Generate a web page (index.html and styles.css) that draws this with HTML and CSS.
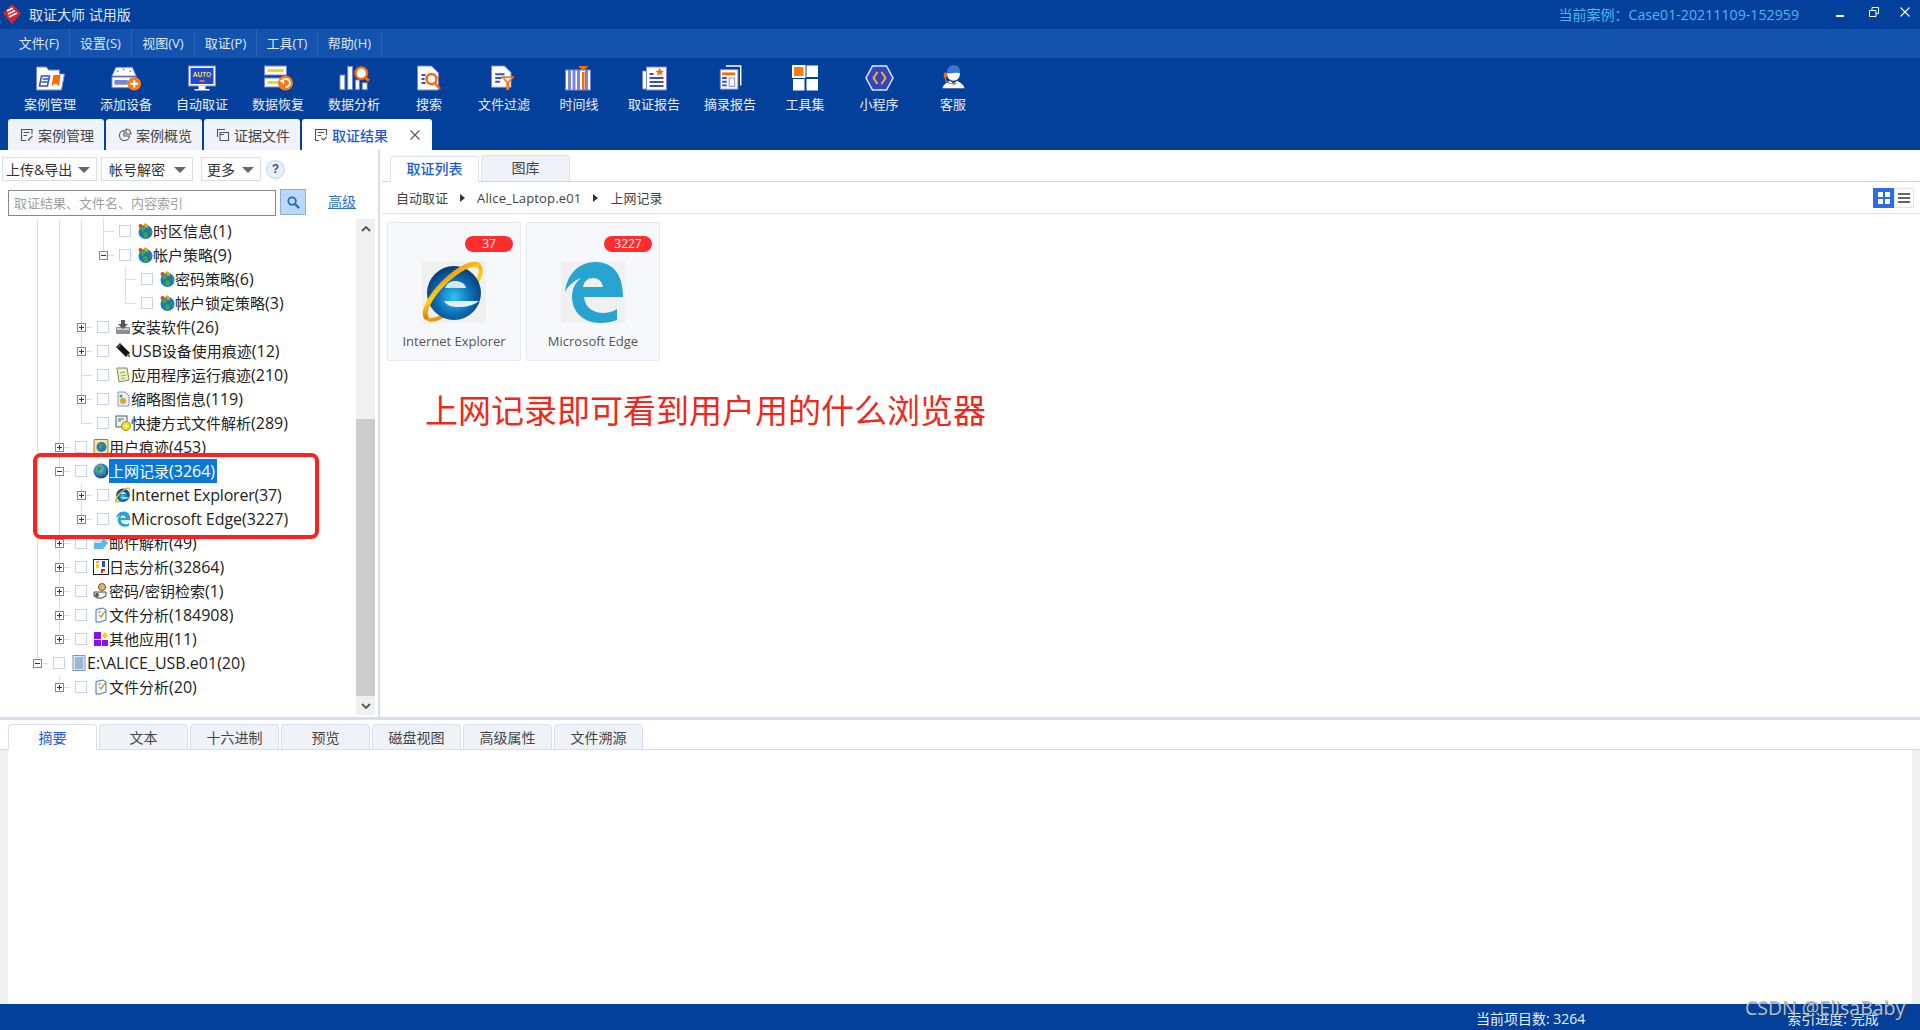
FILE: index.html
```html
<!DOCTYPE html>
<html lang="zh-CN">
<head>
<meta charset="utf-8">
<title>取证大师 试用版</title>
<link rel="stylesheet" href="styles.css">
</head>
<body>
<svg class="sprite" aria-hidden="true">
  <defs>
    <radialGradient id="gSphere" cx="50%" cy="58%" r="58%"><stop offset="0" stop-color="#35c4f4"/><stop offset=".5" stop-color="#0e74ba"/><stop offset="1" stop-color="#063a74"/></radialGradient>
    <linearGradient id="gRing" x1="0" y1="1" x2="1" y2="0"><stop offset="0" stop-color="#e07c08"/><stop offset=".5" stop-color="#ffcf14"/><stop offset="1" stop-color="#ee9410"/></linearGradient>
    <radialGradient id="gGlobe" cx="40%" cy="35%" r="70%"><stop offset="0" stop-color="#8fd0ee"/><stop offset=".6" stop-color="#2a78b8"/><stop offset="1" stop-color="#0f3f80"/></radialGradient>
  </defs>
  <symbol id="i-ie" viewBox="0 0 64 62">
    <g transform="rotate(-45 31 31)"><ellipse cx="31" cy="31" rx="37" ry="13" fill="none" stroke="url(#gRing)" stroke-width="4"/></g>
    <circle cx="32" cy="32" r="27" fill="url(#gSphere)"/>
    <path d="M23 27C25 22 29 20 33 20C38 20 43 22 44 27Z" fill="#d6e8f2"/>
    <path d="M22 40C25 45 30 46 37 46C45 46 52 44 57 40Z" fill="#e2eef4"/>
    <g transform="rotate(-45 31 31)"><path d="M-6 31A37 13 0 0 1 68 31" fill="none" stroke="url(#gRing)" stroke-width="5"/></g>
  </symbol>
  <symbol id="i-edge" viewBox="0 0 64 62">
    <path fill="#28a4d0" fill-rule="evenodd" d="M4 31C6 12 19 1 34 1C52 1 62 13 62 36H23C24 47 33 52 42 52C47 52 52 50.500 56 48V59C51 61 45 62 39 62C22 62 11 50 11 36C11 28 14 22 20 17C12 20 7 25 4 31ZM22 26H42C41 20 37 17 32 17C27 17 23 20 22 26Z"/>
  </symbol>
  <symbol id="i-net" viewBox="0 0 16 16">
    <circle cx="8.500" cy="9" r="7" fill="#1c78b4"/>
    <path d="M2 6L7 2L9 5L6 9Z" fill="#3da850"/><path d="M7 2L10 1L11 5L9 5Z" fill="#e8a020"/>
    <path d="M6 10L10 9L11 14L7 15Z" fill="#3fa84a"/><path d="M11 7L15.500 8L14 12Z" fill="#2f9a50"/>
    <circle cx="3.500" cy="3" r="2" fill="#d8452a"/><circle cx="8" cy="1.800" r="1.500" fill="#e8a020"/>
  </symbol>
  <symbol id="i-install" viewBox="0 0 16 16">
    <rect x="1" y="8" width="14" height="7" rx="1" fill="#8a8f96"/><rect x="2" y="9" width="12" height="2" fill="#c8ccd2"/>
    <path d="M6 1H10V5H13L8 10L3 5H6Z" fill="#55595f"/>
  </symbol>
  <symbol id="i-usb" viewBox="0 0 16 16">
    <path d="M1 4L5 0L15 10L11 14Z" fill="#111"/><path d="M11.500 12L13 10.500L15.500 13L14 14.500Z" fill="#777"/><path d="M2 4L5 1L6 2L3 5Z" fill="#666"/>
  </symbol>
  <symbol id="i-app" viewBox="0 0 16 16">
    <path d="M2 1H12L14 13L4 15Z" fill="#eef0c8" stroke="#7f8a60"/>
    <path d="M5 6L10 5M6 9L11 8M6 12L10 11" stroke="#8cb050"/>
  </symbol>
  <symbol id="i-thumb" viewBox="0 0 16 16">
    <path d="M3 1H10L14 5V15H3Z" fill="#e6eefa" stroke="#7f9cc8"/>
    <circle cx="8" cy="10" r="3" fill="#e8a020"/><circle cx="6" cy="5" r="1.500" fill="#4aa84a"/>
  </symbol>
  <symbol id="i-short" viewBox="0 0 16 16">
    <rect x="1" y="1" width="11" height="11" fill="#eef2f8" stroke="#505a6a"/><path d="M3 4H9M3 6H6" stroke="#2a7a50"/>
    <circle cx="11" cy="11" r="4.500" fill="#f5e020" stroke="#a09000"/><circle cx="11" cy="11" r="1.500" fill="#fff"/>
  </symbol>
  <symbol id="i-user" viewBox="0 0 16 16">
    <rect x="1" y="0.500" width="14" height="15" rx="1" fill="#f4e2a8" stroke="#a8781c"/>
    <circle cx="8.500" cy="8" r="5" fill="#2a78b8"/><path d="M6 5L10 5L9 9L6 10Z" fill="#3fa84a"/>
  </symbol>
  <symbol id="i-globe" viewBox="0 0 16 16">
    <circle cx="8" cy="8" r="7.500" fill="url(#gGlobe)"/>
    <path d="M4 4C6 3 9 3 9 5C9 7 6 7 6 10C5 10 3 8 4 4Z" fill="#3f9a50"/><path d="M10 9L13 9L11 13Z" fill="#3f9a50"/>
  </symbol>
  <symbol id="i-mail" viewBox="0 0 16 16">
    <path d="M1 2H10L15 8L10 14H1Z" fill="#5fb8e8"/><path d="M1 2H10L8 8L1 8Z" fill="#c8e8f8"/>
  </symbol>
  <symbol id="i-log" viewBox="0 0 16 16">
    <rect x="0.500" y="0.500" width="15" height="15" fill="#fff" stroke="#222"/>
    <rect x="3" y="5" width="3" height="4" fill="#f0d020"/><rect x="9" y="2" width="3" height="6" fill="#2a50c0"/>
    <path d="M8 10H12V12H10V14H8Z" fill="#c83020"/><rect x="3" y="2" width="3" height="2" fill="#e0a0a0"/>
  </symbol>
  <symbol id="i-key" viewBox="0 0 16 16">
    <circle cx="9" cy="4" r="3.500" fill="#e8b070" stroke="#705030"/><path d="M1 9H13V13L9 15H4L1 13Z" fill="#f4f4f4" stroke="#444"/><circle cx="4" cy="12" r="2" fill="#555"/>
  </symbol>
  <symbol id="i-file" viewBox="0 0 16 16">
    <path d="M3 2.500L10 1V1L13 3V13L7 15L3 15Z" fill="#f6fafe" stroke="#3a78b8"/>
    <path d="M6 8L8 10L13 3" fill="none" stroke="#c8a020" stroke-width="1.300"/>
    <path d="M5 5H8" stroke="#e06050"/>
  </symbol>
  <symbol id="i-other" viewBox="0 0 16 16">
    <rect x="1" y="1" width="7" height="7" fill="#8a10f0"/><rect x="1" y="9" width="7" height="6" fill="#8a10f0"/><rect x="9" y="9" width="6" height="6" fill="#8a10f0"/>
    <path d="M12 1L15.500 4.500L12 8L8.500 4.500Z" fill="#f5d018"/>
  </symbol>
  <symbol id="i-ev" viewBox="0 0 16 16">
    <rect x="2" y="0.500" width="12" height="15" fill="#dbe8f4" stroke="#7a9ab8"/>
    <path d="M4 3H12M4 5H12M4 7H12M4 9H12M4 11H12M4 13H12" stroke="#5a8ab0"/>
  </symbol>
</svg>

<div class="app">
  <header class="titlebar">
    <svg class="logo" viewBox="0 0 18 20"><path d="M9 0L18 9L9 20L0 9Z" fill="#d8252c"/><path d="M4 7L10 4M5 10L12 6.500M6 13L14 9" stroke="#fff" stroke-width="1.600"/></svg>
    <span class="app-name">取证大师 试用版</span>
    <span class="case-name">当前案例：<span class="case-id">Case01-20211109-152959</span></span>
    <div class="winctl">
      <svg class="win win-min" viewBox="0 0 8 2"><rect width="8" height="2" fill="#fff"/></svg>
      <svg class="win win-res" viewBox="0 0 10 10"><path d="M3 3V.5H9.500V6.500H7M.5 3.500H7V9.500H.5Z" fill="none" stroke="#fff"/></svg>
      <svg class="win win-close" viewBox="0 0 10 10"><path d="M.5 .5L9.500 9.500M9.500 .5L.5 9.500" stroke="#fff" stroke-width="1.100"/></svg>
    </div>
  </header>
  <nav class="menubar">
    <span class="menu m1">文件(F)</span><span class="menu m2">设置(S)</span><span class="menu m3">视图(V)</span><span class="menu m4">取证(P)</span><span class="menu m5">工具(T)</span><span class="menu m6">帮助(H)</span>
  </nav>
  <section class="ribbon">
    <div class="tools">
      <div class="tool"><svg class="tool-ico" viewBox="0 0 30 26"><path d="M1 2H11L13 5H24V9H29L26 25H1Z" fill="#fff" stroke="#7b85d6"/><path d="M6 11H14L12 21H4ZM7 14H13M6 17H12" fill="#fff" stroke="#3b4cd0" stroke-width="1.500"/><path d="M18 10H25L23.500 21L20 18.500L16 21Z" fill="#ff6a00"/></svg><span class="tool-label">案例管理</span></div>
      <div class="tool"><svg class="tool-ico" viewBox="0 0 32 26"><path d="M5 2H22L26 11H1Z" fill="#fff" stroke="#7b85d6"/><circle cx="7" cy="6" r="1" fill="#7b85d6"/><circle cx="20" cy="6" r="1" fill="#7b85d6"/><circle cx="13" cy="4" r="1" fill="#7b85d6"/><rect x="1" y="12" width="25" height="11" fill="#fff" stroke="#7b85d6"/><rect x="3.500" y="15" width="14" height="5" rx="1" fill="#7b85d6"/><circle cx="24" cy="19" r="7" fill="#ff7a10"/><path d="M24 15V23M20 19H28" stroke="#fff" stroke-width="2"/></svg><span class="tool-label">添加设备</span></div>
      <div class="tool"><svg class="tool-ico" viewBox="0 0 30 26"><rect x="1" y="1" width="27" height="20" fill="#fff" stroke="#7b85d6"/><rect x="3" y="3" width="23" height="16" fill="#1b48d8"/><text class="auto-txt" x="14.500" y="12">AUTO</text><rect x="12" y="15" width="5" height="2" fill="#ff6a00"/><path d="M11 21H18V24H22V25.500H7V24H11Z" fill="#fff"/></svg><span class="tool-label">自动取证</span></div>
      <div class="tool"><svg class="tool-ico" viewBox="0 0 30 26"><rect x="1" y="1" width="22" height="9" fill="#fff" stroke="#7b85d6"/><rect x="4" y="4" width="16" height="3" fill="#f0d818"/><rect x="1" y="13" width="22" height="9" fill="#fff" stroke="#7b85d6"/><rect x="4" y="16" width="11" height="3" fill="#f0d818"/><circle cx="22" cy="18" r="7.500" fill="#ff7a10"/><path d="M18.500 17A4 4 0 1 1 22 22" fill="none" stroke="#fff" stroke-width="2"/><path d="M16 15H20.500V19.500Z" fill="#fff"/></svg><span class="tool-label">数据恢复</span></div>
      <div class="tool"><svg class="tool-ico" viewBox="0 0 32 26"><rect x="1" y="10" width="5" height="15" fill="#fff" stroke="#7b85d6"/><rect x="9" y="1" width="5" height="24" fill="#fff" stroke="#7b85d6"/><rect x="17" y="15" width="4" height="10" fill="#fff" stroke="#7b85d6"/><rect x="24" y="18" width="5" height="7" fill="#fff" stroke="#7b85d6"/><circle cx="23" cy="8" r="6" fill="#fff" stroke="#ff6a00" stroke-width="2.500"/><path d="M27 12.500L31 16" stroke="#ff6a00" stroke-width="3"/></svg><span class="tool-label">数据分析</span></div>
      <div class="tool"><svg class="tool-ico" viewBox="0 0 30 26"><path d="M3 1H17L24 8V25H3Z" fill="#fff" stroke="#7b85d6"/><path d="M7 10H11M7 14H10M7 18H11" stroke="#3b4cd0" stroke-width="2"/><circle cx="17" cy="14" r="5" fill="#fff" stroke="#ff6a00" stroke-width="2.500"/><path d="M20.500 18L25.500 24" stroke="#ff6a00" stroke-width="2.500"/></svg><span class="tool-label">搜索</span></div>
      <div class="tool"><svg class="tool-ico" viewBox="0 0 30 28"><path d="M1 1H15L22 8V24H1Z" fill="#fff" stroke="#7b85d6"/><path d="M5 10H15M5 14H12M5 18H10" stroke="#3b4cd0" stroke-width="2"/><path d="M11 12H26L20 19V27H17V19Z" fill="#ff7a10"/><path d="M15 14H22L18.500 18Z" fill="#fff"/></svg><span class="tool-label">文件过滤</span></div>
      <div class="tool"><svg class="tool-ico" viewBox="0 0 30 26"><rect x="1" y="5" width="25" height="20" fill="#fff" stroke="#7b85d6"/><path d="M5 5V25M9.500 5V25M14 5V25M22 5V25" stroke="#7b85d6" stroke-width="3"/><rect x="17.500" y="7" width="2.500" height="18" fill="#ff6a00"/><path d="M13.500 1H24L19 6Z" fill="#ff6a00"/></svg><span class="tool-label">时间线</span></div>
      <div class="tool"><svg class="tool-ico" viewBox="0 0 26 26"><path d="M5 6H1V24H5Z" fill="#fff" stroke="#7b85d6"/><rect x="5" y="2" width="20" height="23" fill="#fff" stroke="#7b85d6"/><path d="M8 9H12M8 13H22M8 17H22M8 21H22" stroke="#3b4cd0" stroke-width="2"/><path d="M18 3L19.500 6.500H23L20.200 8.500L21.200 12L18 10L14.800 12L15.800 8.500L13 6.500H16.500Z" fill="#ff6a00" transform="translate(2 0) scale(.9)"/></svg><span class="tool-label">取证报告</span></div>
      <div class="tool"><svg class="tool-ico" viewBox="0 0 26 28"><path d="M8 1H24V22" fill="none" stroke="#fff" stroke-width="1.500"/><rect x="2" y="5" width="19" height="21" fill="#fff" stroke="#7b85d6"/><rect x="4" y="8" width="14" height="3" fill="#ff6a00"/><path d="M4 14H9M4 18H9M4 22H9" stroke="#3b4cd0" stroke-width="2"/><rect x="11.500" y="14" width="6" height="9" fill="none" stroke="#7b85d6"/></svg><span class="tool-label">摘录报告</span></div>
      <div class="tool"><svg class="tool-ico" viewBox="0 0 26 26"><rect x="0.500" y="1" width="11.500" height="11" fill="#ff7a10" stroke="#fff" stroke-width="2"/><rect x="14" y="0.500" width="11.500" height="11.500" fill="#fff"/><rect x="0.500" y="14" width="11.500" height="11.500" fill="#fff"/><rect x="14" y="14" width="11.500" height="11.500" fill="#fff"/></svg><span class="tool-label">工具集</span></div>
      <div class="tool"><svg class="tool-ico" viewBox="0 0 28 26"><path d="M7 1H21L27.500 13L21 25H7L.5 13Z" fill="#2f45c8" stroke="#dfe9ff" stroke-width="1.500"/><path d="M12 7L8 13L12 19M16 7L20 13L16 19" fill="none" stroke="#ffb400" stroke-width="2"/></svg><span class="tool-label">小程序</span></div>
      <div class="tool"><svg class="tool-ico" viewBox="0 0 26 28"><path d="M6 10C5 3 10 0 13 0C18 0 21 4 20 10Z" fill="#3a78cc"/><path d="M6 9C9 10 14 7 20 9C20 14 17 17 13 17C9 17 6 14 6 9Z" fill="#fff"/><path d="M1 25C3 20 6 19 9 17L13 20L17 17C20 19 23 20 25 25Z" fill="#fff"/><rect x="2.500" y="8" width="3.500" height="6" rx="1.500" fill="#ff6a00"/><path d="M4 14C4 18 8 20 11 20" fill="none" stroke="#ff6a00" stroke-width="1.200"/><rect x="11" y="19" width="5" height="2" rx="1" fill="#ff6a00"/></svg><span class="tool-label">客服</span></div>
    </div>
    <div class="tabs">
      <div class="tab"><svg class="tab-ico" viewBox="0 0 14 14"><path d="M12 6V1.500H1.500V12.500H6M3.500 4.500H9.500M3.500 7.500H7M8 12.500L12.500 8" fill="none" stroke="#555" stroke-width="1.100"/></svg>案例管理</div>
      <div class="tab"><svg class="tab-ico" viewBox="0 0 14 14"><path d="M6 2.500A5 5 0 1 0 11.500 8H6ZM8 1V6H13A5 5 0 0 0 8 1Z" fill="none" stroke="#555" stroke-width="1.100"/></svg>案例概览</div>
      <div class="tab"><svg class="tab-ico" viewBox="0 0 14 14"><path d="M1.500 9V1.500H9M4 4.500H12.500V12.500H4ZM4 6.500H8" fill="none" stroke="#555" stroke-width="1.100"/></svg>证据文件</div>
      <div class="tab tab-on"><svg class="tab-ico" viewBox="0 0 14 14"><path d="M5 12.500H1.500V1.500H12.500V7M3.500 4.500H10M3.500 7.500H7M7.500 10L9.500 12L12.500 9" fill="none" stroke="#555" stroke-width="1.100"/></svg><span class="tab-text">取证结果</span><svg class="tab-x" viewBox="0 0 10 10"><path d="M.5 .5L9.500 9.500M9.500 .5L.5 9.500" stroke="#555" stroke-width="1.100"/></svg></div>
    </div>
  </section>

  <main class="main">
    <aside class="left">
      <div class="actions">
        <div class="drop d1">上传&amp;导出<i class="caret"></i></div>
        <div class="drop d2">帐号解密<i class="caret"></i></div>
        <div class="drop d3">更多<i class="caret"></i></div>
        <div class="help">?</div>
      </div>
      <div class="search">
        <div class="search-input">取证结果、文件名、内容索引</div>
        <div class="search-btn"><svg class="search-ico" viewBox="0 0 14 14"><circle cx="5.500" cy="5.500" r="4" fill="none" stroke="#2a6fb0" stroke-width="2"/><path d="M8.500 8.500L13 13" stroke="#2a6fb0" stroke-width="2.500"/></svg></div>
        <a class="adv">高级</a>
      </div>
      <div class="treewrap">
        <div class="tree">
          <div class="row"><i class="c v"></i><i class="c v"></i><i class="c v"></i><i class="c t"></i><span class="cb"></span><svg class="ti"><use href="#i-net"/></svg><span class="tl">时区信息<span class="lat">(1)</span></span></div>
          <div class="row"><i class="c v"></i><i class="c v"></i><i class="c v"></i><i class="c l"><b class="ex"></b></i><span class="cb"></span><svg class="ti"><use href="#i-net"/></svg><span class="tl">帐户策略<span class="lat">(9)</span></span></div>
          <div class="row"><i class="c v"></i><i class="c v"></i><i class="c v"></i><i class="c"></i><i class="c t"></i><span class="cb"></span><svg class="ti"><use href="#i-net"/></svg><span class="tl">密码策略<span class="lat">(6)</span></span></div>
          <div class="row"><i class="c v"></i><i class="c v"></i><i class="c v"></i><i class="c"></i><i class="c l"></i><span class="cb"></span><svg class="ti"><use href="#i-net"/></svg><span class="tl">帐户锁定策略<span class="lat">(3)</span></span></div>
          <div class="row"><i class="c v"></i><i class="c v"></i><i class="c t"><b class="ex plus"></b></i><span class="cb"></span><svg class="ti"><use href="#i-install"/></svg><span class="tl">安装软件<span class="lat">(26)</span></span></div>
          <div class="row"><i class="c v"></i><i class="c v"></i><i class="c t"><b class="ex plus"></b></i><span class="cb"></span><svg class="ti"><use href="#i-usb"/></svg><span class="tl"><span class="lat">USB</span>设备使用痕迹<span class="lat">(12)</span></span></div>
          <div class="row"><i class="c v"></i><i class="c v"></i><i class="c t"></i><span class="cb"></span><svg class="ti"><use href="#i-app"/></svg><span class="tl">应用程序运行痕迹<span class="lat">(210)</span></span></div>
          <div class="row"><i class="c v"></i><i class="c v"></i><i class="c t"><b class="ex plus"></b></i><span class="cb"></span><svg class="ti"><use href="#i-thumb"/></svg><span class="tl">缩略图信息<span class="lat">(119)</span></span></div>
          <div class="row"><i class="c v"></i><i class="c v"></i><i class="c l"></i><span class="cb"></span><svg class="ti"><use href="#i-short"/></svg><span class="tl">快捷方式文件解析<span class="lat">(289)</span></span></div>
          <div class="row"><i class="c v"></i><i class="c t"><b class="ex plus"></b></i><span class="cb"></span><svg class="ti"><use href="#i-user"/></svg><span class="tl">用户痕迹<span class="lat">(453)</span></span></div>
          <div class="row"><i class="c v"></i><i class="c t"><b class="ex"></b></i><span class="cb"></span><svg class="ti"><use href="#i-globe"/></svg><span class="tl tl-on">上网记录<span class="lat">(3264)</span></span></div>
          <div class="row"><i class="c v"></i><i class="c v"></i><i class="c t"><b class="ex plus"></b></i><span class="cb"></span><svg class="ti"><use href="#i-ie"/></svg><span class="tl lat lat-ie">Internet Explorer(37)</span></div>
          <div class="row"><i class="c v"></i><i class="c v"></i><i class="c l"><b class="ex plus"></b></i><span class="cb"></span><svg class="ti"><use href="#i-edge"/></svg><span class="tl lat">Microsoft Edge(3227)</span></div>
          <div class="row"><i class="c v"></i><i class="c t"><b class="ex plus"></b></i><span class="cb"></span><svg class="ti"><use href="#i-mail"/></svg><span class="tl">邮件解析<span class="lat">(49)</span></span></div>
          <div class="row"><i class="c v"></i><i class="c t"><b class="ex plus"></b></i><span class="cb"></span><svg class="ti"><use href="#i-log"/></svg><span class="tl">日志分析<span class="lat">(32864)</span></span></div>
          <div class="row"><i class="c v"></i><i class="c t"><b class="ex plus"></b></i><span class="cb"></span><svg class="ti"><use href="#i-key"/></svg><span class="tl">密码<span class="lat">/</span>密钥检索<span class="lat">(1)</span></span></div>
          <div class="row"><i class="c v"></i><i class="c t"><b class="ex plus"></b></i><span class="cb"></span><svg class="ti"><use href="#i-file"/></svg><span class="tl">文件分析<span class="lat">(184908)</span></span></div>
          <div class="row"><i class="c v"></i><i class="c l"><b class="ex plus"></b></i><span class="cb"></span><svg class="ti"><use href="#i-other"/></svg><span class="tl">其他应用<span class="lat">(11)</span></span></div>
          <div class="row"><i class="c l"><b class="ex"></b></i><span class="cb"></span><svg class="ti"><use href="#i-ev"/></svg><span class="tl lat">E:\ALICE_USB.e01(20)</span></div>
          <div class="row"><i class="c"></i><i class="c l"><b class="ex plus"></b></i><span class="cb"></span><svg class="ti"><use href="#i-file"/></svg><span class="tl">文件分析<span class="lat">(20)</span></span></div>
        </div>
        <div class="scrollbar">
          <div class="sb-btn"><svg class="sb-arrow" viewBox="0 0 10 6"><path d="M1 5L5 1L9 5" fill="none" stroke="#555" stroke-width="1.800"/></svg></div>
          <div class="sb-track"><div class="sb-thumb"></div></div>
          <div class="sb-btn"><svg class="sb-arrow" viewBox="0 0 10 6"><path d="M1 1L5 5L9 1" fill="none" stroke="#555" stroke-width="1.800"/></svg></div>
        </div>
      </div>
    </aside>
    <section class="right">
      <div class="rtabs">
        <div class="rtab rtab-on">取证列表</div>
        <div class="rtab">图库</div>
      </div>
      <div class="crumb">
        <span>自动取证</span><i class="arrow"></i><span class="crumb-lat">Alice_Laptop.e01</span><i class="arrow"></i><span>上网记录</span>
        <div class="views">
          <div class="view view-on"><svg class="view-ico" viewBox="0 0 12 12"><path d="M0 0H5V5H0ZM7 0H12V5H7ZM0 7H5V12H0ZM7 7H12V12H7Z" fill="#fff"/></svg></div>
          <div class="view"><svg class="view-ico" viewBox="0 0 12 12"><path d="M0 1H12V3H0ZM0 5H12V7H0ZM0 9H12V11H0Z" fill="#666"/></svg></div>
        </div>
      </div>
      <div class="cards">
        <div class="card"><span class="badge">37</span><svg class="card-ico"><use href="#i-ie"/></svg><span class="card-label">Internet Explorer</span></div>
        <div class="card"><span class="badge">3227</span><svg class="card-ico"><use href="#i-edge"/></svg><span class="card-label">Microsoft Edge</span></div>
      </div>
    </section>
  </main>

  <div class="hsplit"></div>

  <section class="bottom">
    <div class="btabs">
      <div class="btab btab-on">摘要</div><div class="btab">文本</div><div class="btab">十六进制</div><div class="btab">预览</div><div class="btab">磁盘视图</div><div class="btab">高级属性</div><div class="btab">文件溯源</div>
    </div>
    <div class="detail"><div class="detail-body"></div></div>
  </section>

  <footer class="status">
    <span class="st-count">当前项目数: 3264</span>
    <span class="st-index">索引进度: 完成</span>
  </footer>

  <div class="red-box"></div>
  <div class="note">上网记录即可看到用户用的什么浏览器</div>
  <div class="mark">CSDN @ElisaBaby</div>
</div>
</body>
</html>
```
FILE: styles.css
```css
* { box-sizing: border-box; }
html, body { margin: 0; padding: 0; }
body { font-family: "Open Sans", "Noto Sans CJK SC", sans-serif; font-size: 13px; color: #333; background: #fff; }
.sprite { position: absolute; width: 0; height: 0; overflow: hidden; }
.app { position: relative; display: flex; flex-direction: column; width: 100%; height: 100vh; overflow: hidden; }

/* title */
.titlebar { flex: 0 0 29px; display: flex; align-items: center; background: #03409c; color: #dce6f5; padding-left: 3px; }
.logo { width: 18px; height: 20px; flex: none; margin-right: 8px; margin-top: -2px; }
.app-name { font-size: 14px; line-height: 29px; }
.case-name { margin-left: auto; font-size: 14px; color: #4cb8f5; line-height: 29px; }
.case-id { font-size: 14.2px; }
.winctl { display: flex; align-items: center; margin-left: 37px; width: 84px; height: 29px; position: relative; }
.win { display: block; flex: none; }
.win-min { width: 8px; height: 2px; margin-top: 2px; }
.win-res { width: 10px; height: 10px; margin-left: 25px; margin-top: -5px; }
.win-close { width: 10px; height: 10px; margin-left: 21px; margin-top: -5px; }

/* menu */
.menubar { flex: 0 0 29px; display: flex; background: #1353ad; padding-left: 9px; }
.menu { display: flex; align-items: center; justify-content: center; color: #dfe8f6; font-size: 13px; border-right: 1px solid #2a63b5; height: 27px; padding-bottom: 1px; }
.m1 { width: 61px; } .m2 { width: 62px; } .m3 { width: 63px; } .m4 { width: 62px; } .m5 { width: 61px; } .m6 { width: 64px; }

/* ribbon */
.ribbon { flex: 0 0 92px; background: #03409c; display: flex; flex-direction: column; }
.tools { flex: 0 0 61px; display: flex; padding-left: 12px; }
.tool { min-width: 74px; padding: 7px 12px 0; display: flex; flex-direction: column; align-items: center; }
.tool-ico { width: 31px; height: 26px; display: block; flex: none; }
.tool-label { color: #e8eef8; font-size: 13px; line-height: 18px; margin-top: 4px; white-space: nowrap; }
.auto-txt { font: 700 6.5px "Liberation Sans", sans-serif; fill: #f5e020; text-anchor: middle; }
.tabs { flex: 0 0 31px; display: flex; gap: 2px; padding-left: 8px; }
.tab { width: 96px; height: 31px; background: #f0f3f9; border-radius: 3px 3px 0 0; display: flex; align-items: center; padding: 1px 0 0 12px; font-size: 14px; color: #444; }
.tab-ico { width: 14px; height: 14px; flex: none; margin-right: 4px; }
.tab-on { width: 130px; background: #fff; }
.tab-text { color: #1c5be0; font-weight: 500; }
.tab-x { width: 10px; height: 10px; margin-left: 22px; flex: none; }

/* main */
.main { flex: 0 0 567px; display: flex; min-height: 0; }
.left { flex: 0 0 380px; border-right: 2px solid #d5dfee; display: flex; flex-direction: column; }
.actions { flex: 0 0 39px; display: flex; align-items: flex-start; padding: 7px 0 0 2px; }
.drop { height: 24px; border: 1px solid #d5e0ee; display: flex; align-items: center; justify-content: space-between; font-size: 14px; padding: 0 6px 0 3px; color: #333; white-space: nowrap; }
.d1 { width: 95px; } .d2 { width: 92px; margin-left: 4px; padding-left: 7px; } .d3 { width: 60px; margin-left: 8px; padding-left: 5px; }
.caret { width: 0; height: 0; border-left: 6px solid transparent; border-right: 6px solid transparent; border-top: 6px solid #666; display: block; margin-top: 2px; }
.help { width: 19px; height: 19px; margin: 3px 0 0 5px; border-radius: 50%; border: 1px solid #c6d6e8; background: #eaf0f8; color: #2a5a9c; font: 700 12px/17px "Liberation Sans", sans-serif; text-align: center; }
.search { flex: 0 0 30px; display: flex; align-items: flex-start; padding-left: 8px; }
.search-input { width: 268px; height: 26px; margin-top: 1px; border: 1px solid #888; color: #a0a0a0; font-size: 13px; line-height: 24px; padding-left: 5px; }
.search-btn { width: 26px; height: 26px; margin-left: 4px; background: #bcd8f8; border: 1px solid #8cb0d8; display: flex; align-items: center; justify-content: center; }
.search-ico { width: 13px; height: 13px; }
.adv { margin-left: 22px; margin-top: 2px; font-size: 14px; line-height: 22px; color: #2a72c8; text-decoration: underline; }

/* tree */
.treewrap { flex: 1; display: flex; min-height: 0; }
.tree { flex: 1; overflow: hidden; padding-left: 26px; }
.row { height: 24px; display: flex; align-items: center; white-space: nowrap; }
.c { flex: 0 0 22px; width: 22px; height: 24px; position: relative; display: block; }
.c.v::before, .c.t::before, .c.l::before { content: ""; position: absolute; left: 11px; top: 0; width: 1px; background: #ddd; }
.c.v::before, .c.t::before { height: 24px; }
.c.l::before { height: 12px; }
.c.t::after, .c.l::after { content: ""; position: absolute; left: 11px; top: 12px; width: 11px; height: 1px; background: #ddd; }
.ex { position: absolute; z-index: 1; left: 7px; top: 8px; width: 9px; height: 9px; border: 1px solid #888; background: #fff; }
.ex::before { content: ""; position: absolute; left: 1px; top: 3px; width: 5px; height: 1px; background: #334; }
.ex.plus::after { content: ""; position: absolute; left: 3px; top: 1px; width: 1px; height: 5px; background: #334; }
.cb { flex: 0 0 12px; width: 12px; height: 12px; margin-left: 5px; border: 1px solid #c4d2f5; background: #fff; }
.ti { flex: 0 0 16px; width: 16px; height: 16px; margin-left: 6px; }
.tl { font-size: 15px; line-height: 24px; color: #222; }
.tl.lat, .lat { font-size: 16px; }
.lat-ie { letter-spacing: -.2px; }
.tl-on { background: #0a78d7; color: #fff; padding-right: 2px; }

.scrollbar { flex: 0 0 19px; margin: 0 3px 2px 0; background: #f0f0f0; display: flex; flex-direction: column; }
.sb-btn { flex: 0 0 19px; display: flex; align-items: center; justify-content: center; }
.sb-arrow { width: 10px; height: 6px; }
.sb-track { flex: 1; display: flex; flex-direction: column; justify-content: flex-end; }
.sb-thumb { height: 277px; background: #cdcdcd; }

/* right */
.right { flex: 1; min-width: 0; display: flex; flex-direction: column; }
.rtabs { flex: 0 0 31px; display: flex; gap: 2px; padding: 5px 0 0 8px; margin-left: 2px; border-bottom: 1px solid #cfd4e6; }
.rtab { width: 89px; height: 26px; border: 1px solid #dbe4f3; border-bottom: 0; border-radius: 4px 4px 0 0; background: #eff2f8; text-align: center; font-size: 14px; line-height: 24px; color: #444; }
.rtab-on { background: #fff; color: #1c5be0; font-weight: 500; position: relative; top: 1px; }
.crumb { flex: 0 0 32px; display: flex; align-items: center; padding-left: 14px; margin-left: 2px; border-bottom: 1px solid #d8dfef; font-size: 13px; color: #444; white-space: nowrap; }
.crumb-lat { letter-spacing: .15px; }
.arrow { width: 0; height: 0; border-left: 5px solid #333; border-top: 4px solid transparent; border-bottom: 4px solid transparent; margin: 0 12px 0 12px; }
.views { margin-left: auto; margin-right: 6px; display: flex; }
.view { width: 20px; height: 20px; border: 1px solid #dbe4f5; display: flex; align-items: center; justify-content: center; background: #fff; }
.view-on { width: 21px; background: #2e6be6; border-color: #2e6be6; }
.view-ico { width: 12px; height: 12px; }
.cards { display: flex; gap: 5px; padding: 8px 0 0 7px; }
.card { width: 134px; height: 139px; background: #f7f8fb; border: 1px solid #e4e9f2; border-radius: 2px; display: flex; flex-direction: column; align-items: center; padding-top: 13px; }
.badge { align-self: flex-end; margin-right: 7px; width: 48px; height: 16px; border-radius: 8px; background: #ff2d2d; color: #fff; font-size: 12px; line-height: 16px; text-align: center; }
.card-ico { width: 64px; height: 62px; margin-top: 9px; background: #f0f0f0; flex: none; }
.card-label { margin-top: 8px; font-size: 13px; line-height: 20px; color: #555; white-space: nowrap; }

/* bottom */
.hsplit { flex: 0 0 3px; background: #d5e0ee; }
.bottom { flex: 1; min-height: 0; display: flex; flex-direction: column; padding-top: 4px; }
.btabs { flex: 0 0 26px; display: flex; gap: 2px; padding-left: 8px; position: relative; z-index: 1; }
.btab { width: 89px; height: 26px; border: 1px solid #d5e0f2; border-radius: 4px 4px 0 0; background: #eff2f8; text-align: center; font-size: 14px; line-height: 25px; color: #444; }
.btab-on { background: #fff; border-bottom-color: #fff; color: #1c5be0; }
.detail { flex: 1; background: #f0f0f0; padding: 0 8px; border-top: 1px solid #d5d8e0; margin-top: -1px; }
.detail-body { height: 100%; background: #fff; }

/* status */
.status { flex: 0 0 26px; background: #03409c; display: flex; color: #e8eef8; font-size: 14px; line-height: 26px; padding: 2px 0 0 1476px; height: 26px; overflow: hidden; }
.st-index { margin-left: 202px; }

/* overlays */
.red-box { position: absolute; left: 33px; top: 453px; width: 286px; height: 86px; border: 4px solid #ff1f1f; border-radius: 8px; }
.note { position: absolute; left: 425px; top: 388px; font-size: 33px; line-height: 46px; color: #f0281c; white-space: nowrap; }
.mark { position: absolute; left: 1745px; top: 994px; font-size: 19.5px; line-height: 28px; color: #b4c0d2; text-shadow: 1px 1px 1px rgba(50,50,50,.6); white-space: nowrap; }
```
